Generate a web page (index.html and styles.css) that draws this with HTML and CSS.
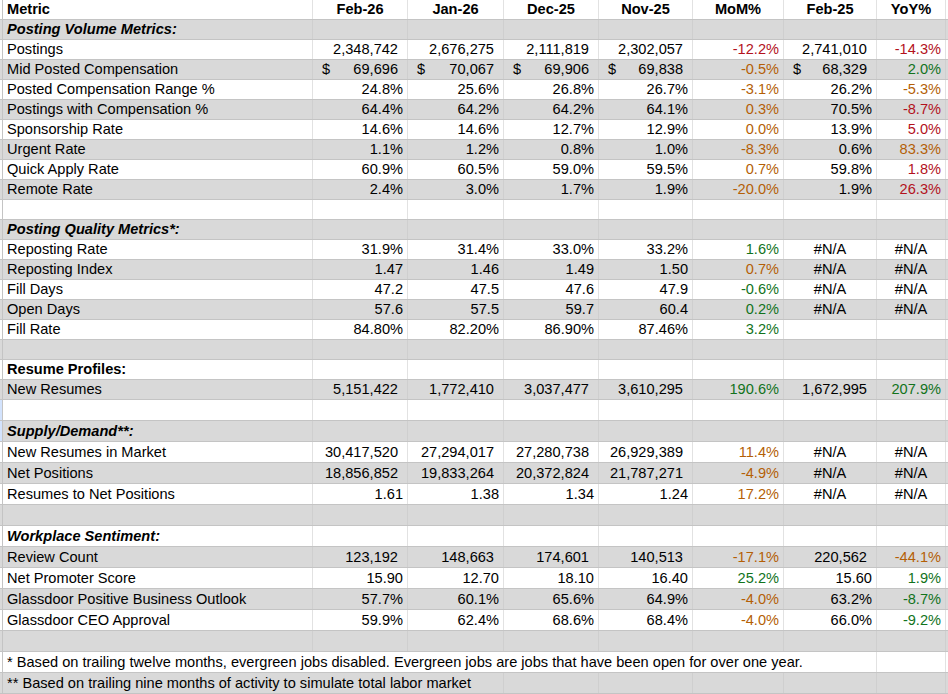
FILE: index.html
```html
<!DOCTYPE html>
<html lang="en">
<head>
<meta charset="utf-8">
<title>Metrics</title>
<link rel="stylesheet" href="styles.css">
</head>
<body>
<div class="sheet">
  <div class="r"><div class="c gut"></div><div class="c l b">Metric</div><div class="c hd">Feb-26</div><div class="c hd">Jan-26</div><div class="c hd">Dec-25</div><div class="c hd">Nov-25</div><div class="c hd">MoM%</div><div class="c hd">Feb-25</div><div class="c hd">YoY%</div><div class="c end"></div></div>
  <div class="r g"><div class="c gut"></div><div class="c l bi">Posting Volume Metrics:</div><div class="c"></div><div class="c"></div><div class="c"></div><div class="c"></div><div class="c"></div><div class="c"></div><div class="c"></div><div class="c end"></div></div>
  <div class="r"><div class="c gut"></div><div class="c l">Postings</div><div class="c n a">2,348,742</div><div class="c n a">2,676,275</div><div class="c n a">2,111,819</div><div class="c n a">2,302,057</div><div class="c n red">-12.2%</div><div class="c n a">2,741,010</div><div class="c n red">-14.3%</div><div class="c end"></div></div>
  <div class="r g"><div class="c gut"></div><div class="c l">Mid Posted Compensation</div><div class="c d"><span>$</span><span>69,696</span></div><div class="c d"><span>$</span><span>70,067</span></div><div class="c d"><span>$</span><span>69,906</span></div><div class="c d"><span>$</span><span>69,838</span></div><div class="c n org">-0.5%</div><div class="c d"><span>$</span><span>68,329</span></div><div class="c n grn">2.0%</div><div class="c end"></div></div>
  <div class="r"><div class="c gut"></div><div class="c l">Posted Compensation Range %</div><div class="c n">24.8%</div><div class="c n">25.6%</div><div class="c n">26.8%</div><div class="c n">26.7%</div><div class="c n org">-3.1%</div><div class="c n">26.2%</div><div class="c n org">-5.3%</div><div class="c end"></div></div>
  <div class="r g"><div class="c gut"></div><div class="c l">Postings with Compensation %</div><div class="c n">64.4%</div><div class="c n">64.2%</div><div class="c n">64.2%</div><div class="c n">64.1%</div><div class="c n org">0.3%</div><div class="c n">70.5%</div><div class="c n red">-8.7%</div><div class="c end"></div></div>
  <div class="r"><div class="c gut"></div><div class="c l">Sponsorship Rate</div><div class="c n">14.6%</div><div class="c n">14.6%</div><div class="c n">12.7%</div><div class="c n">12.9%</div><div class="c n org">0.0%</div><div class="c n">13.9%</div><div class="c n red">5.0%</div><div class="c end"></div></div>
  <div class="r g"><div class="c gut"></div><div class="c l">Urgent Rate</div><div class="c n">1.1%</div><div class="c n">1.2%</div><div class="c n">0.8%</div><div class="c n">1.0%</div><div class="c n org">-8.3%</div><div class="c n">0.6%</div><div class="c n org">83.3%</div><div class="c end"></div></div>
  <div class="r"><div class="c gut"></div><div class="c l">Quick Apply Rate</div><div class="c n">60.9%</div><div class="c n">60.5%</div><div class="c n">59.0%</div><div class="c n">59.5%</div><div class="c n org">0.7%</div><div class="c n">59.8%</div><div class="c n red">1.8%</div><div class="c end"></div></div>
  <div class="r g"><div class="c gut"></div><div class="c l">Remote Rate</div><div class="c n">2.4%</div><div class="c n">3.0%</div><div class="c n">1.7%</div><div class="c n">1.9%</div><div class="c n org">-20.0%</div><div class="c n">1.9%</div><div class="c n red">26.3%</div><div class="c end"></div></div>
  <div class="r"><div class="c gut"></div><div class="c l"></div><div class="c"></div><div class="c"></div><div class="c"></div><div class="c"></div><div class="c"></div><div class="c"></div><div class="c"></div><div class="c end"></div></div>
  <div class="r g"><div class="c gut"></div><div class="c l bi">Posting Quality Metrics*:</div><div class="c"></div><div class="c"></div><div class="c"></div><div class="c"></div><div class="c"></div><div class="c"></div><div class="c"></div><div class="c end"></div></div>
  <div class="r"><div class="c gut"></div><div class="c l">Reposting Rate</div><div class="c n">31.9%</div><div class="c n">31.4%</div><div class="c n">33.0%</div><div class="c n">33.2%</div><div class="c n grn">1.6%</div><div class="c p">#N/A</div><div class="c p">#N/A</div><div class="c end"></div></div>
  <div class="r g"><div class="c gut"></div><div class="c l">Reposting Index</div><div class="c n">1.47</div><div class="c n">1.46</div><div class="c n">1.49</div><div class="c n">1.50</div><div class="c n org">0.7%</div><div class="c p">#N/A</div><div class="c p">#N/A</div><div class="c end"></div></div>
  <div class="r"><div class="c gut"></div><div class="c l">Fill Days</div><div class="c n">47.2</div><div class="c n">47.5</div><div class="c n">47.6</div><div class="c n">47.9</div><div class="c n grn">-0.6%</div><div class="c p">#N/A</div><div class="c p">#N/A</div><div class="c end"></div></div>
  <div class="r g"><div class="c gut"></div><div class="c l">Open Days</div><div class="c n">57.6</div><div class="c n">57.5</div><div class="c n">59.7</div><div class="c n">60.4</div><div class="c n grn">0.2%</div><div class="c p">#N/A</div><div class="c p">#N/A</div><div class="c end"></div></div>
  <div class="r"><div class="c gut"></div><div class="c l">Fill Rate</div><div class="c n">84.80%</div><div class="c n">82.20%</div><div class="c n">86.90%</div><div class="c n">87.46%</div><div class="c n grn">3.2%</div><div class="c"></div><div class="c"></div><div class="c end"></div></div>
  <div class="r g"><div class="c gut"></div><div class="c l"></div><div class="c"></div><div class="c"></div><div class="c"></div><div class="c"></div><div class="c"></div><div class="c"></div><div class="c"></div><div class="c end"></div></div>
  <div class="r"><div class="c gut"></div><div class="c l b">Resume Profiles:</div><div class="c"></div><div class="c"></div><div class="c"></div><div class="c"></div><div class="c"></div><div class="c"></div><div class="c"></div><div class="c end"></div></div>
  <div class="r g"><div class="c gut"></div><div class="c l">New Resumes</div><div class="c n a">5,151,422</div><div class="c n a">1,772,410</div><div class="c n a">3,037,477</div><div class="c n a">3,610,295</div><div class="c n grn">190.6%</div><div class="c n a">1,672,995</div><div class="c n grn">207.9%</div><div class="c end"></div></div>
  <div class="r t"><div class="c gut sel"></div><div class="c l"></div><div class="c"></div><div class="c"></div><div class="c"></div><div class="c"></div><div class="c"></div><div class="c"></div><div class="c"></div><div class="c end"></div></div>
  <div class="r t g"><div class="c gut sel"></div><div class="c l bi">Supply/Demand**:</div><div class="c"></div><div class="c"></div><div class="c"></div><div class="c"></div><div class="c"></div><div class="c"></div><div class="c"></div><div class="c end"></div></div>
  <div class="r t"><div class="c gut"></div><div class="c l">New Resumes in Market</div><div class="c n a">30,417,520</div><div class="c n a">27,294,017</div><div class="c n a">27,280,738</div><div class="c n a">26,929,389</div><div class="c n org">11.4%</div><div class="c p">#N/A</div><div class="c p">#N/A</div><div class="c end"></div></div>
  <div class="r t g"><div class="c gut"></div><div class="c l">Net Positions</div><div class="c n a">18,856,852</div><div class="c n a">19,833,264</div><div class="c n a">20,372,824</div><div class="c n a">21,787,271</div><div class="c n org">-4.9%</div><div class="c p">#N/A</div><div class="c p">#N/A</div><div class="c end"></div></div>
  <div class="r t"><div class="c gut"></div><div class="c l">Resumes to Net Positions</div><div class="c n">1.61</div><div class="c n">1.38</div><div class="c n">1.34</div><div class="c n">1.24</div><div class="c n org">17.2%</div><div class="c p">#N/A</div><div class="c p">#N/A</div><div class="c end"></div></div>
  <div class="r t g"><div class="c gut"></div><div class="c l"></div><div class="c"></div><div class="c"></div><div class="c"></div><div class="c"></div><div class="c"></div><div class="c"></div><div class="c"></div><div class="c end"></div></div>
  <div class="r t"><div class="c gut"></div><div class="c l bi">Workplace Sentiment:</div><div class="c"></div><div class="c"></div><div class="c"></div><div class="c"></div><div class="c"></div><div class="c"></div><div class="c"></div><div class="c end"></div></div>
  <div class="r t g"><div class="c gut"></div><div class="c l">Review Count</div><div class="c n a">123,192</div><div class="c n a">148,663</div><div class="c n a">174,601</div><div class="c n a">140,513</div><div class="c n org">-17.1%</div><div class="c n a">220,562</div><div class="c n org">-44.1%</div><div class="c end"></div></div>
  <div class="r t"><div class="c gut"></div><div class="c l">Net Promoter Score</div><div class="c n">15.90</div><div class="c n">12.70</div><div class="c n">18.10</div><div class="c n">16.40</div><div class="c n grn">25.2%</div><div class="c n">15.60</div><div class="c n grn">1.9%</div><div class="c end"></div></div>
  <div class="r t g"><div class="c gut"></div><div class="c l">Glassdoor Positive Business Outlook</div><div class="c n">57.7%</div><div class="c n">60.1%</div><div class="c n">65.6%</div><div class="c n">64.9%</div><div class="c n org">-4.0%</div><div class="c n">63.2%</div><div class="c n grn">-8.7%</div><div class="c end"></div></div>
  <div class="r t"><div class="c gut"></div><div class="c l">Glassdoor CEO Approval</div><div class="c n">59.9%</div><div class="c n">62.4%</div><div class="c n">68.6%</div><div class="c n">68.4%</div><div class="c n org">-4.0%</div><div class="c n">66.0%</div><div class="c n grn">-9.2%</div><div class="c end"></div></div>
  <div class="r t g"><div class="c gut"></div><div class="c l"></div><div class="c"></div><div class="c"></div><div class="c"></div><div class="c"></div><div class="c"></div><div class="c"></div><div class="c"></div><div class="c end"></div></div>
  <div class="r t"><div class="c gut"></div><div class="c l s7">* Based on trailing twelve months, evergreen jobs disabled. Evergreen jobs are jobs that have been open for over one year.</div><div class="c"></div><div class="c end"></div></div>
  <div class="r t g"><div class="c gut"></div><div class="c l s3">** Based on trailing nine months of activity to simulate total labor market</div><div class="c"></div><div class="c"></div><div class="c"></div><div class="c"></div><div class="c"></div><div class="c end"></div></div>
</div>
</body>
</html>
```

FILE: styles.css
```css
html, body {
  margin: 0;
  padding: 0;
  background: #ffffff;
}

body {
  font-family: "Liberation Sans", Arial, sans-serif;
  font-size: 14.6px;
  color: #000000;
}

.sheet {
  width: 948px;
  overflow: hidden;
}

.r {
  display: grid;
  grid-template-columns: 3px 310px 95px 96px 95px 94px 91px 93px 69px 3px;
  height: 20px;
  box-sizing: border-box;
  border-bottom: 1px solid #c4c4c4;
  background: #ffffff;
}

.r.t {
  height: 21px;
}

.r.g {
  background: #d9d9d9;
}

.c {
  box-sizing: border-box;
  border-right: 1px solid #e2e2e2;
  padding: 0 4px;
  line-height: 19px;
  white-space: nowrap;
  overflow: visible;
  min-width: 0;
}

.r.t .c {
  line-height: 20px;
}

.r.g .c {
  border-right-color: #cfcfcf;
}

.c.gut {
  padding: 0;
  border-right-color: #c4c4c4;
}

.r.g .c.gut {
  border-right-color: #c4c4c4;
}

.c.gut.sel {
  background: #d3e3fd;
}

.c.end {
  border-right: 0;
  padding: 0;
}

.l {
  text-align: left;
}

.b {
  font-weight: bold;
}

.bi {
  font-weight: bold;
  font-style: italic;
}

.hd {
  font-weight: bold;
  text-align: center;
}

.n {
  text-align: right;
}

.n.a {
  padding-right: 9px;
}

.d {
  display: flex;
  justify-content: space-between;
  padding-left: 9px;
  padding-right: 9px;
}

.p {
  text-align: center;
}

.red {
  color: #b3121c;
}

.org {
  color: #b45f06;
}

.grn {
  color: #12731c;
}

.s7 {
  grid-column: span 7;
}

.s3 {
  grid-column: span 3;
}
```
